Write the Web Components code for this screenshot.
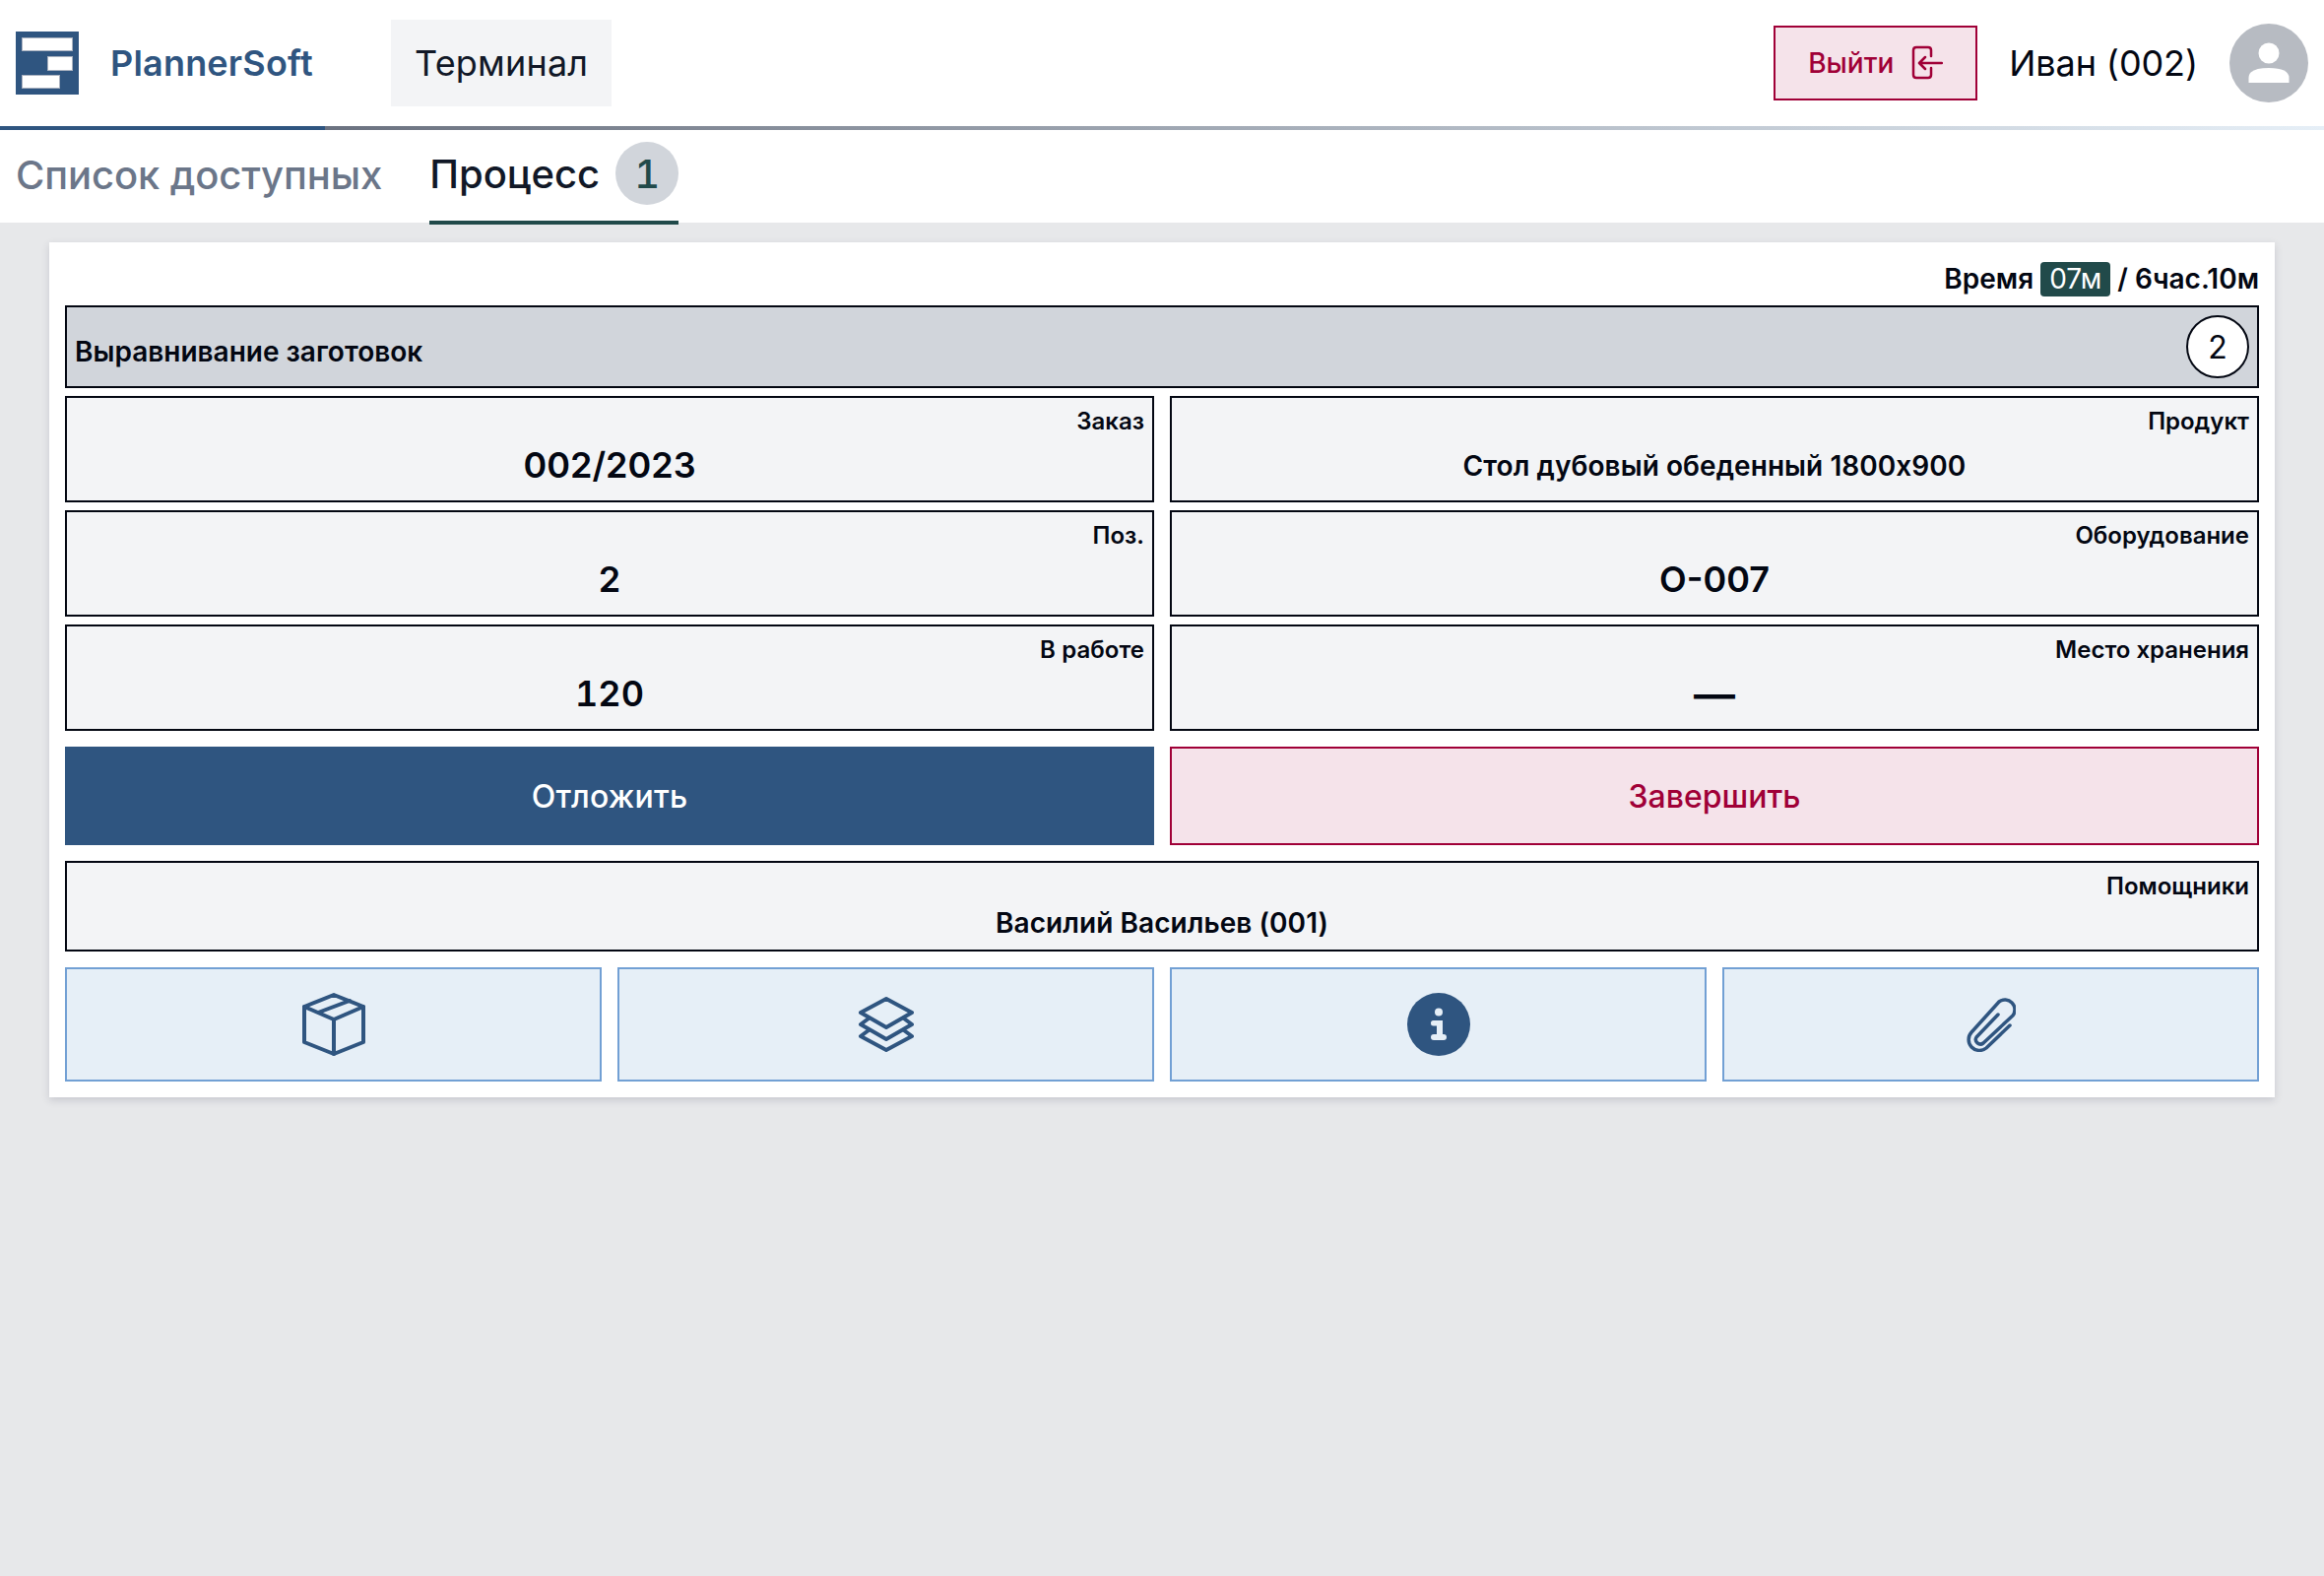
<!DOCTYPE html>
<html lang="ru">
<head>
<meta charset="utf-8">
<title>PlannerSoft</title>
<style>
  html, body { margin: 0; height: 100%; }
  body { background: #e7e8ea; font-family: Inter, "Liberation Sans", sans-serif; color: #030712; }
</style>
</head>
<body>
<app-header></app-header>
<app-tabs></app-tabs>
<job-card>
  <span slot="time">Время <time-chip>07м</time-chip> / 6час.10м</span>
  <job-title num="2">Выравнивание заготовок</job-title>
  <field-box label="Заказ" size="lg">002/2023</field-box>
  <field-box label="Продукт">Стол дубовый обеденный 1800x900</field-box>
  <field-box label="Поз." size="lg">2</field-box>
  <field-box label="Оборудование" size="lg">О-007</field-box>
  <field-box label="В работе" size="lg" tnum>120</field-box>
  <field-box label="Место хранения" size="dash">—</field-box>
  <action-button slot="actions" kind="primary">Отложить</action-button>
  <action-button slot="actions" kind="danger">Завершить</action-button>
  <field-box slot="helpers" label="Помощники" short>Василий Васильев (001)</field-box>
  <icon-button slot="icons">
    <svg width="64" height="64" viewBox="0 0 64 64" fill="none" stroke="#2f5580" stroke-width="4" stroke-linejoin="round" stroke-linecap="round">
      <path d="M32 2 62 14V50L32 62 2 50V14Z"/><path d="M2 14 32 27 62 14M32 27V62M16 20 48 8"/>
    </svg>
  </icon-button>
  <icon-button slot="icons">
    <svg width="56" height="56" viewBox="0 0 56 56" fill="none" stroke="#2f5580" stroke-width="4" stroke-linejoin="round" stroke-linecap="round">
      <path d="M28 2 54 16 28 31 2 16Z"/><path d="M10 22 2 28 28 43 54 28 46 22"/><path d="M10 34 2 40 28 54 54 40 46 34"/>
    </svg>
  </icon-button>
  <icon-button slot="icons">
    <svg width="64" height="64" viewBox="0 0 64 64">
      <circle cx="32" cy="32" r="32" fill="#2f5580"/>
      <g fill="#e6eff7"><circle cx="32" cy="19.5" r="4"/><rect x="24" y="28" width="12" height="5.5" rx="2.5"/><rect x="30" y="28" width="6" height="17"/><rect x="24" y="42" width="16" height="6" rx="3"/></g>
    </svg>
  </icon-button>
  <icon-button slot="icons">
    <svg width="50" height="56" viewBox="0 0 50 56" fill="none" stroke="#2f5580" stroke-width="3.5" stroke-linecap="round" stroke-linejoin="round">
      <path d="M44 29 20 52A11 11 0 0 1 5 36L33 5A10 10 0 0 1 47 19L17 47A4.7 4.7 0 0 1 10 41L32 18"/>
    </svg>
  </icon-button>
</job-card>

<script>
class AppHeader extends HTMLElement {
  constructor() {
    super();
    this.attachShadow({ mode: 'open' });
    this.shadowRoot.innerHTML = `
      <style>
        :host { display: block; background: #fff; }
        .bar { height: 128px; display: flex; align-items: center; padding: 0 16px; box-sizing: border-box; }
        .brand { display: flex; align-items: center; gap: 32px; color: #2f5580; font-size: 36px; font-weight: 600; width: 381px; letter-spacing: .2px; }
        .menu { height: 88px; display: flex; align-items: center; padding: 0 24px; background: #f3f4f6; color: #111827; font-size: 36px; letter-spacing: .2px; }
        .right { margin-left: auto; display: flex; align-items: center; }
        .exit { width: 207px; height: 76px; box-sizing: border-box; display: flex; align-items: center; justify-content: center; gap: 18px;
          border: 2px solid #a00037; background: #f5e3ea; color: #a00037; font-size: 28px; font-weight: 500; }
        .user { margin: 0 32px; font-size: 36px; letter-spacing: -.1px; }
        .line { height: 4px; background: linear-gradient(90deg, #2f5580 330px, #6b7280 330px, #e6eff7 100%); }
      </style>
      <div class="bar">
        <div class="brand">
          <svg width="64" height="64" viewBox="0 0 64 64">
            <rect width="64" height="64" fill="#2f5580"/>
            <g fill="#fff" stroke="#aab2c0"><rect x="6.5" y="6.5" width="51" height="13"/><rect x="32.5" y="25.5" width="25" height="14"/><rect x="6.5" y="44.5" width="38" height="13"/></g>
          </svg>
          PlannerSoft
        </div>
        <div class="menu">Терминал</div>
        <div class="right">
          <div class="exit">Выйти
            <svg width="32" height="36" viewBox="0 0 32 36" fill="none" stroke="#a00037" stroke-width="2.5" stroke-linecap="round" stroke-linejoin="round">
              <path d="M20 11V5Q20 2 17 2H5Q2 2 2 5V30Q2 33 5 33H17Q20 33 20 30V23"/><path d="M31 18H9M14 12 8 18 14 24"/>
            </svg>
          </div>
          <div class="user">Иван (002)</div>
          <svg width="80" height="80" viewBox="0 0 80 80">
            <circle cx="40" cy="40" r="40" fill="#b7bbc2"/>
            <circle cx="40" cy="30" r="10.5" fill="#fff"/>
            <path d="M19.5 60V55Q19.5 45 40 45 60.5 45 60.5 55V60Z" fill="#fff"/>
          </svg>
        </div>
      </div>
      <div class="line"></div>`;
  }
}

class AppTabs extends HTMLElement {
  constructor() {
    super();
    this.attachShadow({ mode: 'open' });
    this.shadowRoot.innerHTML = `
      <style>
        :host { display: flex; height: 94px; box-sizing: border-box; background: #fff; padding-left: 16px; gap: 48px; font-size: 40px; font-weight: 500; }
        .tab { display: flex; align-items: center; gap: 16px; color: #6b7689; height: 96px; padding-bottom: 6px; box-sizing: border-box; letter-spacing: -.1px; }
        .on { color: #111827; border-bottom: 4px solid #214a4a; padding-bottom: 4px; letter-spacing: 0; }
        .num { width: 64px; height: 64px; border-radius: 50%; background: #d1d5db; color: #214a4a; display: flex; align-items: center; justify-content: center; font-size: 40px; font-variant-numeric: tabular-nums; }
      </style>
      <div class="tab">Список доступных</div>
      <div class="tab on">Процесс <span class="num">1</span></div>`;
  }
}

class JobCard extends HTMLElement {
  constructor() {
    super();
    this.attachShadow({ mode: 'open' });
    this.shadowRoot.innerHTML = `
      <style>
        :host { display: block; margin: 20px 50px 0; padding: 16px; background: #fff; box-shadow: 0 3px 8px rgba(40,40,70,.16); }
        .time { height: 48px; padding-bottom: 6px; box-sizing: border-box; display: flex; justify-content: flex-end; align-items: center; font-size: 28px; font-weight: 600; }
        .fields { display: grid; grid-template-columns: 1fr 1fr; column-gap: 16px; row-gap: 8px; }
        ::slotted(job-title) { grid-column: 1 / -1; }
        .actions { display: grid; grid-template-columns: 1fr 1fr; gap: 16px; margin-top: 16px; }
        .helpers { margin-top: 16px; }
        .icons { display: grid; grid-template-columns: repeat(4, 1fr); gap: 16px; margin-top: 16px; }
      </style>
      <div class="time"><slot name="time"></slot></div>
      <div class="fields"><slot></slot></div>
      <div class="actions"><slot name="actions"></slot></div>
      <div class="helpers"><slot name="helpers"></slot></div>
      <div class="icons"><slot name="icons"></slot></div>`;
  }
}

class TimeChip extends HTMLElement {
  constructor() {
    super();
    this.attachShadow({ mode: 'open' });
    this.shadowRoot.innerHTML = `
      <style>
        :host { display: inline-block; background: #214a4a; color: #fff; font-weight: 400; padding: 0 9px; border-radius: 4px; line-height: 35px; }
      </style>
      <slot></slot>`;
  }
}

class JobTitle extends HTMLElement {
  constructor() {
    super();
    this.attachShadow({ mode: 'open' });
    this.shadowRoot.innerHTML = `
      <style>
        :host { display: flex; justify-content: space-between; align-items: center; height: 84px; box-sizing: border-box; padding: 0 8px;
          border: 2px solid #030712; background: #d1d5db; font-size: 28px; font-weight: 600; }
        .text { padding-top: 10px; }
        .num { width: 64px; height: 64px; box-sizing: border-box; border: 2px solid #030712; border-radius: 50%; background: #fff; display: flex; align-items: center; justify-content: center; font-size: 32px; font-weight: 400; }
      </style>
      <span class="text"><slot></slot></span>
      <span class="num">${this.getAttribute('num')}</span>`;
  }
}

class FieldBox extends HTMLElement {
  constructor() {
    super();
    this.attachShadow({ mode: 'open' });
    this.shadowRoot.innerHTML = `
      <style>
        :host { display: flex; flex-direction: column; height: 108px; box-sizing: border-box; padding: 10px 8px 0; border: 2px solid #030712; background: #f3f4f6; font-size: 28px; font-weight: 600; letter-spacing: .06px; --pad: 5px; }
        :host([size="lg"]) { font-size: 36px; letter-spacing: 0; --pad: 6px; }
        :host([size="dash"]) { font-size: 42px; letter-spacing: 0; }
        :host([tnum]) { font-variant-numeric: tabular-nums; }
        :host([short]) { height: 92px; }
        .label { text-align: right; font-size: 24px; line-height: 28px; font-weight: 600; letter-spacing: 0; }
        .value { flex: 1; display: flex; align-items: center; justify-content: center; padding-bottom: var(--pad); }
      </style>
      <div class="label">${this.getAttribute('label')}</div>
      <div class="value"><slot></slot></div>`;
  }
}

class ActionButton extends HTMLElement {
  constructor() {
    super();
    this.attachShadow({ mode: 'open' });
    this.shadowRoot.innerHTML = `
      <style>
        :host { display: flex; align-items: center; justify-content: center; height: 100px; box-sizing: border-box; font-size: 32px; font-weight: 500; }
        :host([kind="primary"]) { background: #2f5580; color: #fff; letter-spacing: .2px; }
        :host([kind="danger"]) { background: #f5e3ea; color: #a00037; border: 2px solid #a00037; }
      </style>
      <slot></slot>`;
  }
}

class IconButton extends HTMLElement {
  constructor() {
    super();
    this.attachShadow({ mode: 'open' });
    this.shadowRoot.innerHTML = `
      <style>
        :host { display: flex; align-items: center; justify-content: center; height: 116px; box-sizing: border-box; background: #e6eff7; border: 2px solid #72a0d4; }
      </style>
      <slot></slot>`;
  }
}

customElements.define('app-header', AppHeader);
customElements.define('app-tabs', AppTabs);
customElements.define('job-card', JobCard);
customElements.define('time-chip', TimeChip);
customElements.define('job-title', JobTitle);
customElements.define('field-box', FieldBox);
customElements.define('action-button', ActionButton);
customElements.define('icon-button', IconButton);
</script>
</body>
</html>
